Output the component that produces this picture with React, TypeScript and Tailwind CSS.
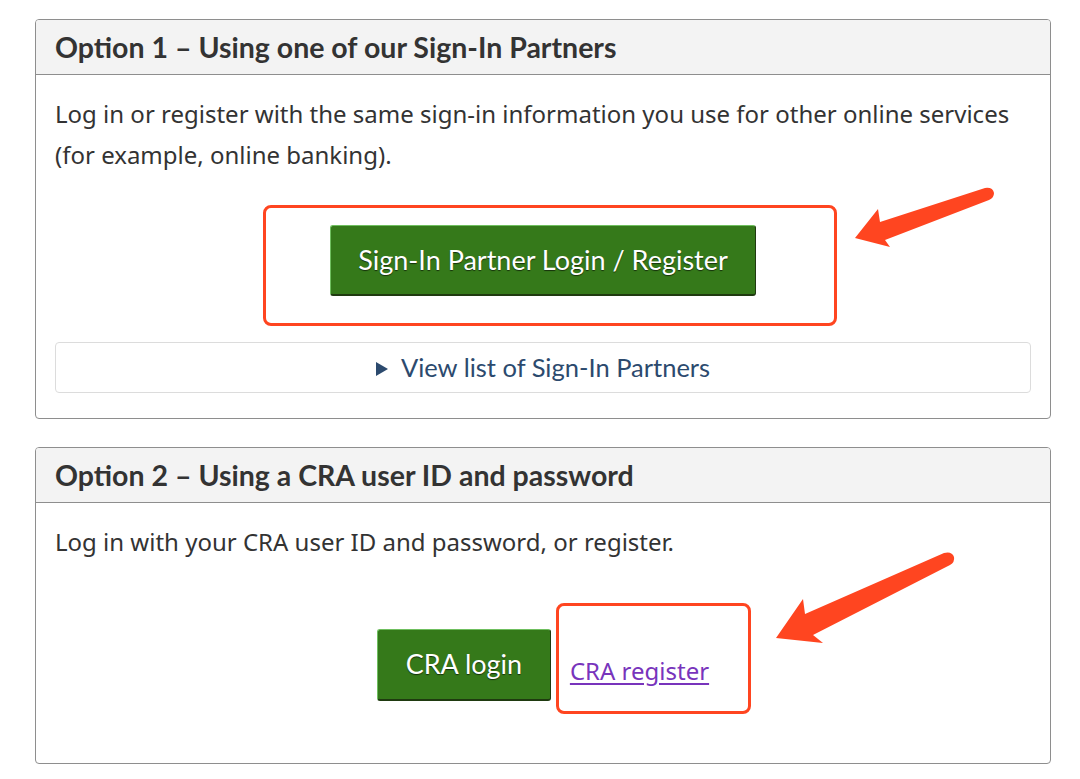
export default function App() {
  const body = { fontFamily: '"Noto Sans", "Open Sans", sans-serif' };
  const lato = { fontFamily: 'Lato, "Noto Sans", sans-serif' };

  return (
    <div className="relative w-[1080px] h-[779px] bg-white overflow-hidden text-[#333]" style={body}>
      <div className="pt-[19px] pl-[35px] pr-[29px]">
        {/* Option 1 */}
        <section className="border border-[#8e8e8e] rounded-[4px] overflow-hidden">
          <div className="h-[55px] bg-[#f3f3f3] border-b border-[#8e8e8e] px-[19px] flex items-center">
            <h3 className="text-[28.5px] font-bold text-[#333]" style={lato}>
              Option 1 – Using one of our Sign-In Partners
            </h3>
          </div>
          <div className="px-[19px] pt-[18px] pb-[25px]">
            <p className="text-[24px] leading-[41px]">
              Log in or register with the same sign-in information you use for other online services
              (for example, online banking).
            </p>
            <div className="flex justify-center mt-[50px]">
              <div className="relative">
                <button
                  className="h-[71px] w-[426px] rounded-[3px] bg-[#35791a] border border-[#6fbf5f] border-b-[#1f3a10] border-r-[#1f3a10] border-b-2 text-white text-[27px] [text-shadow:0_1px_1px_rgba(0,0,0,0.6)]"
                  style={lato}
                >
                  Sign-In Partner Login / Register
                </button>
                <div className="absolute left-[-67px] top-[-20px] w-[574px] h-[121px] border-[3px] border-[#ff4520] rounded-[8px] pointer-events-none" />
              </div>
            </div>
            <div className="mt-[46px] h-[51px] border border-[#dcdcdc] rounded-[4px] flex items-center justify-center gap-[13px] text-[#2c4a6e]">
              <svg width="12" height="14" viewBox="0 0 12 14" className="mt-[2px]">
                <path d="M0 0 L12 7 L0 14 Z" fill="#2c4a6e" />
              </svg>
              <span className="text-[25.5px]" style={lato}>View list of Sign-In Partners</span>
            </div>
          </div>
        </section>

        {/* Option 2 */}
        <section className="mt-[28px] border border-[#8e8e8e] rounded-[4px] overflow-hidden">
          <div className="h-[55px] bg-[#f3f3f3] border-b border-[#8e8e8e] px-[19px] flex items-center">
            <h3 className="text-[28.5px] font-bold text-[#333]" style={lato}>
              Option 2 – Using a CRA user ID and password
            </h3>
          </div>
          <div className="px-[19px] pt-[18px] pb-[62px]">
            <p className="text-[24px] leading-[41px]">Log in with your CRA user ID and password, or register.</p>
            <div className="flex justify-center items-end mt-[67px]">
              <button
                className="h-[72px] w-[174px] rounded-[3px] bg-[#35791a] border border-[#6fbf5f] border-b-[#1f3a10] border-r-[#1f3a10] border-b-2 text-white text-[27px] [text-shadow:0_1px_1px_rgba(0,0,0,0.6)]"
                style={lato}
              >
                CRA login
              </button>
              <div className="relative ml-[19px] mb-[14px]">
                <a href="#" className="block text-[24px] leading-[32px] text-[#7834bc] underline underline-offset-[3px]">
                  CRA register
                </a>
                <div className="absolute left-[-14px] top-[-52px] w-[195px] h-[111px] border-[3px] border-[#ff4520] rounded-[8px] pointer-events-none" />
              </div>
            </div>
          </div>
        </section>
      </div>

      {/* annotation arrows */}
      <svg className="absolute inset-0 pointer-events-none" width="1080" height="779" viewBox="0 0 1080 779">
        <path
          d="M855 238 L878 209 L880 222 L985 188 Q993 187 994 193 Q994 198 989 200 L885 240 L890 247 Z"
          fill="#ff4520"
        />
        <path
          d="M776 638 L803 599 L805 614 L944 553 Q952 551 954 557 Q955 562 950 565 L813 635 L823 643 Z"
          fill="#ff4520"
        />
      </svg>
    </div>
  );
}
